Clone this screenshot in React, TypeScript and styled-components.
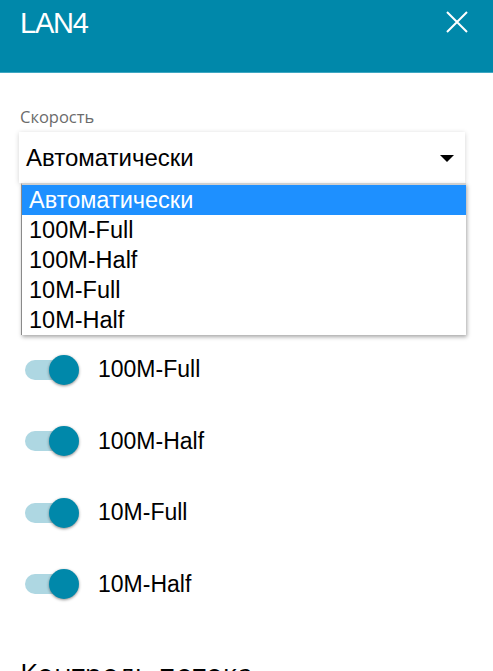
import React from "react";
import styled, { createGlobalStyle } from "styled-components";

const GlobalStyle = createGlobalStyle`
  html, body { margin: 0; padding: 0; background: #fff; }
  body { font-family: "Liberation Sans", Arial, sans-serif; overflow: hidden; }
`;

const Page = styled.div`
  width: 493px;
  height: 671px;
  overflow: hidden;
  background: #fff;
`;

const Header = styled.header`
  height: 72px;
  background: #0088aa;
  border-bottom: 1px solid #3ea7c2;
  display: flex;
  justify-content: space-between;
  align-items: flex-start;
  padding: 0 25px 0 20px;
  box-sizing: content-box;
`;

const Title = styled.h1`
  margin: 0;
  padding-top: 7px;
  color: #fff;
  font-family: "Liberation Sans", Arial, sans-serif;
  font-weight: 400;
  font-size: 29px;
  line-height: 32px;
  letter-spacing: -1.2px;
`;

const CloseButton = styled.button`
  border: 0;
  background: transparent;
  padding: 0;
  margin-top: 11px;
  width: 22px;
  height: 22px;
  display: flex;
  cursor: pointer;
`;

const Content = styled.main`
  padding: 0 20px;
`;

const FieldLabel = styled.div`
  margin-top: 33px;
  font-family: "Open Sans", sans-serif;
  font-size: 16.5px;
  line-height: 22px;
  color: #6b6b6b;
`;

const SelectWrap = styled.div`
  position: relative;
  margin-top: 4px;
  margin-left: -1px;
  width: 446px;
`;

const SelectBox = styled.div`
  height: 51px;
  background: #fff;
  box-shadow: 0 1px 5px rgba(0, 0, 0, 0.18);
  display: flex;
  align-items: center;
  justify-content: space-between;
  padding: 0 11px 0 7px;
  box-sizing: border-box;
  font-family: "Liberation Sans", Arial, sans-serif;
  font-size: 24px;
  color: #000;
`;

const Caret = styled.span`
  width: 0;
  height: 0;
  border-left: 7px solid transparent;
  border-right: 7px solid transparent;
  border-top: 7px solid #000;
  margin-top: 2px;
`;

const Dropdown = styled.ul`
  position: absolute;
  left: 2px;
  top: 51px;
  width: 445px;
  margin: 0;
  padding: 0;
  list-style: none;
  background: #fff;
  border-top: 2px solid #cfcfcf;
  border-left: 1px solid #8a8a8a;
  box-shadow: 1px 2px 4px rgba(0, 0, 0, 0.35);
  box-sizing: border-box;
  z-index: 5;
`;

const Option = styled.li<{ $active?: boolean }>`
  height: 30px;
  line-height: 30px;
  padding-left: 7px;
  font-family: "Liberation Sans", Arial, sans-serif;
  font-size: 23.5px;
  color: ${(p) => (p.$active ? "#fff" : "#000")};
  background: ${(p) => (p.$active ? "#1e90ff" : "#fff")};
`;

const ToggleList = styled.div`
  margin-top: 151px;
  display: flex;
  flex-direction: column;
`;

const ToggleRow = styled.label`
  height: 71.5px;
  display: flex;
  align-items: center;
  gap: 19px;
  padding-left: 5px;
`;

const Switch = styled.span`
  position: relative;
  width: 54px;
  height: 30px;
  display: flex;
  align-items: center;
`;

const Track = styled.span`
  width: 45px;
  height: 20px;
  border-radius: 10px;
  background: #aed7e2;
`;

const Knob = styled.span`
  position: absolute;
  right: 0;
  top: 0;
  width: 30px;
  height: 30px;
  border-radius: 50%;
  background: #0088aa;
  box-shadow: 0 1px 3px rgba(0, 0, 0, 0.45);
`;

const ToggleText = styled.span`
  font-family: "Liberation Sans", Arial, sans-serif;
  font-size: 23px;
  color: #000;
`;

const SectionTitle = styled.h2`
  margin: 36px 0 0;
  font-family: "Open Sans", sans-serif;
  font-weight: 400;
  font-size: 28px;
  line-height: 34px;
  color: #000;
`;

const options = ["Автоматически", "100M-Full", "100M-Half", "10M-Full", "10M-Half"];
const toggles = ["100M-Full", "100M-Half", "10M-Full", "10M-Half"];

export default function App() {
  return (
    <Page>
      <GlobalStyle />
      <Header>
        <Title>LAN4</Title>
        <CloseButton aria-label="Закрыть">
          <svg width="22" height="22" viewBox="0 0 22 22">
            <path d="M1 1 L21 21 M21 1 L1 21" stroke="#fff" strokeWidth="2" fill="none" />
          </svg>
        </CloseButton>
      </Header>
      <Content>
        <FieldLabel>Скорость</FieldLabel>
        <SelectWrap>
          <SelectBox>
            <span>Автоматически</span>
            <Caret />
          </SelectBox>
          <Dropdown>
            {options.map((o, i) => (
              <Option key={o} $active={i === 0}>
                {o}
              </Option>
            ))}
          </Dropdown>
        </SelectWrap>
        <ToggleList>
          {toggles.map((t) => (
            <ToggleRow key={t}>
              <Switch>
                <Track />
                <Knob />
              </Switch>
              <ToggleText>{t}</ToggleText>
            </ToggleRow>
          ))}
        </ToggleList>
        <SectionTitle>Контроль потока</SectionTitle>
      </Content>
    </Page>
  );
}
